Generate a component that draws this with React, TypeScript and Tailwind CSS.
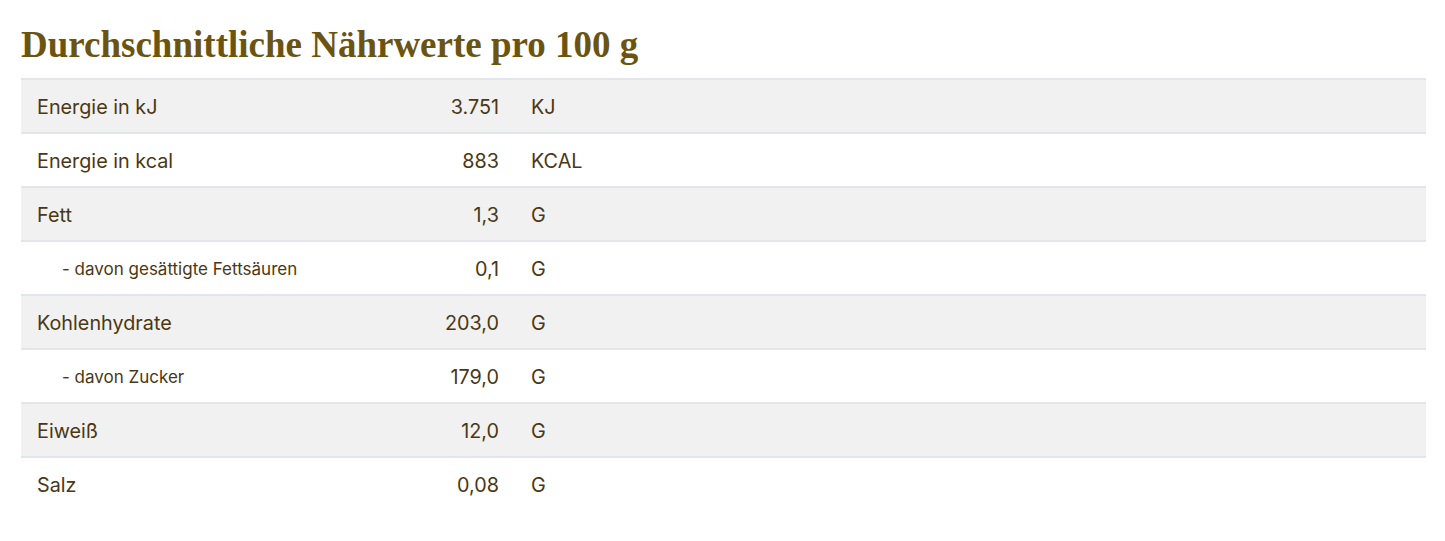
const rows = [
  { label: "Energie in kJ", value: "3.751", unit: "KJ" },
  { label: "Energie in kcal", value: "883", unit: "KCAL" },
  { label: "Fett", value: "1,3", unit: "G" },
  { label: "- davon gesättigte Fettsäuren", value: "0,1", unit: "G", sub: true },
  { label: "Kohlenhydrate", value: "203,0", unit: "G" },
  { label: "- davon Zucker", value: "179,0", unit: "G", sub: true },
  { label: "Eiweiß", value: "12,0", unit: "G" },
  { label: "Salz", value: "0,08", unit: "G" },
];

export default function App() {
  return (
    <div className="min-h-[541px] bg-white px-[21px] pt-[24px]">
      <h2 className="mb-[12px] font-['Liberation_Serif',serif] text-[37px] font-bold leading-[42px] text-[#6b5411]">
        Durchschnittliche Nährwerte pro 100 g
      </h2>
      <table className="w-[1405px] border-collapse font-['Inter',sans-serif] text-[#4b3714]">
        <tbody>
          {rows.map((r, i) => (
            <tr
              key={r.label}
              className={`h-[54px] border-t-2 border-[#e2e6ea] ${i % 2 === 0 ? "bg-[#f1f1f1]" : "bg-white"}`}
            >
              <td
                className={`w-[420px] pt-[3px] ${
                  r.sub ? "pl-[41px] text-[17px]" : "pl-[16px] text-[19.8px]"
                }`}
              >
                {r.label}
              </td>
              <td className="w-[74px] pr-[16px] pt-[3px] text-right text-[19.8px]">{r.value}</td>
              <td className="pl-[16px] pt-[3px] text-[19.8px]">{r.unit}</td>
            </tr>
          ))}
        </tbody>
      </table>
    </div>
  );
}
